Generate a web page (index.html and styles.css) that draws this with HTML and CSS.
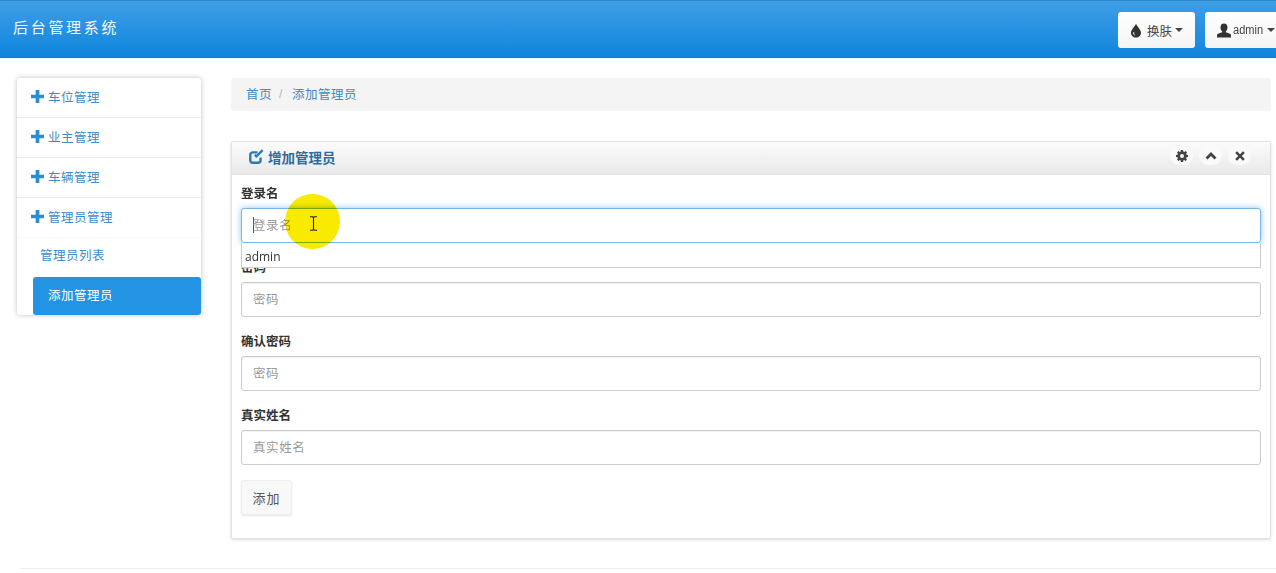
FILE: index.html
```html
<!DOCTYPE html>
<html lang="zh-CN">
<head>
<meta charset="utf-8">
<title>后台管理系统</title>
<link rel="stylesheet" href="styles.css">
</head>
<body>
<header class="topbar">
  <div class="brand">后台管理系统</div>
  <div class="top-actions">
    <button class="top-btn skin-btn" type="button">
      <svg class="ico-tint" viewBox="0 0 12 14"><path d="M6 0C5.600 2.400 1 6 1 9.200 1 12 3.200 14 6 14s5-2 5-4.800C11 6 6.400 2.400 6 0z" fill="#333"/><path d="M3.200 8.800c-.3 1.700.6 3 2 3.400-.8-.9-1.300-2-1-3.600z" fill="#fff"/></svg>
      <span>换肤</span><i class="caret"></i>
    </button>
    <button class="top-btn user-btn" type="button">
      <svg class="ico-user" viewBox="0 0 14 14"><path d="M7 0c2.200 0 3.500 1.500 3.500 3.900 0 1.600-.8 3.200-1.700 3.900v1c1.800.7 4.200 1 5.200 2.400V14H0v-2.800c1-1.400 3.400-1.700 5.200-2.400v-1c-.9-.7-1.700-2.300-1.700-3.900C3.500 1.500 4.800 0 7 0z" fill="#333"/></svg>
      <span class="user-name">admin</span><i class="caret"></i>
    </button>
  </div>
</header>

<div class="layout">
  <nav class="sidebar">
    <a class="nav-item" href="#"><svg class="ico-plus" viewBox="0 0 12 12"><path d="M4.300 0h3.400v4.300H12v3.400H7.700V12H4.300V7.700H0V4.300h4.300z"/></svg>车位管理</a>
    <a class="nav-item" href="#"><svg class="ico-plus" viewBox="0 0 12 12"><path d="M4.300 0h3.400v4.300H12v3.400H7.700V12H4.300V7.700H0V4.300h4.300z"/></svg>业主管理</a>
    <a class="nav-item" href="#"><svg class="ico-plus" viewBox="0 0 12 12"><path d="M4.300 0h3.400v4.300H12v3.400H7.700V12H4.300V7.700H0V4.300h4.300z"/></svg>车辆管理</a>
    <a class="nav-item" href="#"><svg class="ico-plus" viewBox="0 0 12 12"><path d="M4.300 0h3.400v4.300H12v3.400H7.700V12H4.300V7.700H0V4.300h4.300z"/></svg>管理员管理</a>
    <a class="nav-sub" href="#">管理员列表</a>
    <a class="nav-active" href="#">添加管理员</a>
  </nav>

  <main class="content">
    <div class="breadcrumb"><a href="#">首页</a><span class="sep">/</span><a href="#">添加管理员</a></div>

    <section class="panel">
      <div class="panel-head">
        <h2 class="panel-title">
          <svg class="ico-edit" viewBox="0 0 14 14"><path d="M10.800 8v2.500a2.300 2.300 0 0 1-2.300 2.300H3.500a2.300 2.300 0 0 1-2.300-2.300v-5a2.300 2.300 0 0 1 2.300-2.300H8" fill="none" stroke="#2a7ab8" stroke-width="2.200"/><path d="M4.800 6.300l2.100 2.100L13.500 1.800 11.900.3 6.900 5.300 6 4.500z" fill="#2a7ab8"/></svg>
          增加管理员
        </h2>
        <div class="panel-tools">
          <span class="tool"><svg viewBox="0 0 12 12"><path d="M5 0h2l.3 1.600 1 .4L9.700 1l1.400 1.400-1 1.400.4 1 1.500.2v2l-1.500.3-.4 1 .9 1.300-1.400 1.400-1.300-.9-1 .4L7 12H5l-.3-1.500-1-.4-1.300.9L1 9.600l.9-1.300-.4-1L0 7V5l1.500-.2.4-1-.9-1.400L2.400 1l1.300 1 1-.4z" fill="#444"/><circle cx="6" cy="6" r="2" fill="#f4f4f4"/></svg></span>
          <span class="tool"><svg viewBox="0 0 12 12"><path d="M6 2l5.500 5.500L9.500 9.500 6 6 2.500 9.500.5 7.500z" fill="#444"/></svg></span>
          <span class="tool"><svg viewBox="0 0 12 12"><path d="M3 1.200L6 4.200l3-3L10.800 3l-3 3 3 3L9 10.800l-3-3-3 3L1.200 9l3-3-3-3z" fill="#444"/></svg></span>
        </div>
      </div>
      <form class="panel-body">
        <div class="field field-login">
          <label class="field-label">登录名</label>
          <div class="input focused"><i class="text-caret"></i>登录名</div>
          <div class="suggest">admin</div>
          <div class="highlight"></div>
          <svg class="ibeam" viewBox="0 0 9 15"><path d="M1 .7h2.500l1 .8 1-.8H8M4.500 1.500v12M1 14.300h2.500l1-.8 1 .8H8" fill="none" stroke="#222" stroke-width="1.100"/></svg>
        </div>
        <div class="field">
          <label class="field-label">密码</label>
          <div class="input">密码</div>
        </div>
        <div class="field">
          <label class="field-label">确认密码</label>
          <div class="input">密码</div>
        </div>
        <div class="field">
          <label class="field-label">真实姓名</label>
          <div class="input">真实姓名</div>
        </div>
        <button class="submit" type="button">添加</button>
      </form>
    </section>
  </main>
</div>
<div class="footer-line"></div>
</body>
</html>
```

FILE: styles.css
```css
* { box-sizing: border-box; }
html, body { height: 573px; overflow: hidden; }
body {
  margin: 0;
  background: #fff;
  color: #333;
  font-family: "Liberation Sans", "Noto Sans CJK SC", sans-serif;
  font-size: 13px;
}
a { text-decoration: none; }

.topbar {
  height: 58px;
  display: flex;
  justify-content: space-between;
  background: linear-gradient(to bottom, #3f9ee6 0%, #0f86de 100%);
  border-top: 1px solid #2f86c9;
  border-bottom: 1px solid #1f79bd;
  overflow: hidden;
}
.brand {
  margin: 16px 0 0 13px;
  color: #f4f9fd;
  font-size: 15px;
  letter-spacing: 2.700px;
  line-height: 22px;
}
.top-actions {
  display: flex;
  gap: 10px;
  margin: 11px -13px 0 0;
}
.top-btn {
  height: 36px;
  display: flex;
  align-items: center;
  background: linear-gradient(to bottom, #fff, #f4f4f4);
  border: 0;
  border-radius: 3px;
  color: #444;
  font: inherit;
  padding: 0;
}
.skin-btn { width: 77px; padding-left: 12px; font-size: 12.500px; }
.user-btn { width: 84px; padding-left: 12px; font-size: 12px; }
.ico-tint { width: 12px; height: 15px; margin-right: 5px; }
.ico-user { width: 14px; height: 15px; margin-right: 2px; }
.user-name { transform: scaleX(.92); transform-origin: left; margin-right: -2px; }
.caret {
  width: 0;
  height: 0;
  margin-left: 3px;
  border: 4px solid transparent;
  border-top-color: #444;
  border-bottom-width: 0;
}

.layout {
  display: flex;
  align-items: flex-start;
  padding: 20px 5px 0 17px;
  gap: 30px;
}
.sidebar {
  width: 184px;
  flex: none;
  display: flex;
  flex-direction: column;
  border-radius: 3px;
  background: #fff;
  box-shadow: 0 0 5px rgba(0, 0, 0, .25);
}
.nav-item {
  height: 40px;
  display: flex;
  align-items: center;
  padding: 0 0 3px 14px;
  border-bottom: 1px solid #ececec;
  color: #3a8cca;
  font-size: 12.500px;
  letter-spacing: .5px;
}
.nav-item:nth-child(4) { border-bottom-color: #f7f7f7; }
.ico-plus { width: 13px; height: 13px; margin-right: 4px; fill: #2e8bd0; }
.nav-sub {
  height: 39px;
  display: flex;
  align-items: center;
  padding: 0 0 6px 23px;
  color: #3a8cca;
  font-size: 12.500px;
  letter-spacing: .5px;
}
.nav-active {
  height: 38px;
  margin-left: 16px;
  display: flex;
  align-items: center;
  padding: 0 0 4px 15px;
  background: #2394e3;
  border-radius: 3px;
  color: #fff;
  font-size: 12.500px;
  letter-spacing: .5px;
}

.content { flex: 1; min-width: 0; }
.breadcrumb {
  height: 33px;
  display: flex;
  align-items: center;
  padding: 0 0 2px 15px;
  background: #f4f4f4;
  border-radius: 3px;
  font-size: 12.500px;
  letter-spacing: .5px;
}
.breadcrumb a { color: #3a8cca; }
.sep { color: #bbb; margin: 0 9px 0 7px; }

.panel {
  margin-top: 30px;
  height: 398px;
  border: 1px solid #e2e2e2;
  border-radius: 2px;
  box-shadow: 0 1px 3px rgba(0, 0, 0, .14);
  background: #fff;
}
.panel-head {
  height: 33px;
  display: flex;
  align-items: center;
  justify-content: space-between;
  padding: 0 19px 0 16px;
  background: linear-gradient(to bottom, #fbfbfb, #e9e9e9);
  border-bottom: 1px solid #e2e2e2;
}
.panel-title {
  margin: 0 0 3px;
  display: flex;
  align-items: center;
  gap: 3px;
  color: #2a6d9e;
  font-size: 13.500px;
  font-weight: bold;
}
.ico-edit { width: 17px; height: 15px; }
.panel-tools { display: flex; gap: 6px; margin-top: -5px; }
.tool {
  width: 23px;
  height: 19px;
  display: flex;
  align-items: center;
  justify-content: center;
  background: #fafafa;
  border-radius: 10px;
}
.tool svg { width: 12px; height: 12px; }

.panel-body { padding: 8px 9px 0; }
.field { position: relative; margin-bottom: 14px; }
.field-login { z-index: 1; }
.field-label {
  display: block;
  height: 20px;
  margin-bottom: 5px;
  padding-top: 1px;
  color: #333;
  font-size: 12.500px;
  font-weight: bold;
  line-height: 20px;
}
.input {
  height: 35px;
  display: flex;
  align-items: center;
  padding: 0 0 2px 11px;
  border: 1px solid #ccc;
  border-radius: 3px;
  background: #fff;
  color: #999;
  font-size: 12.500px;
  letter-spacing: .6px;
  box-shadow: inset 0 1px 1px rgba(0, 0, 0, .06);
}
.input.focused {
  border-color: #7ab6e6;
  box-shadow: 0 0 6px rgba(102, 175, 233, .7);
}
.text-caret {
  width: 1px;
  height: 16px;
  margin-right: -1px;
  background: #555;
}
.suggest {
  position: absolute;
  left: 0;
  right: 0;
  top: 60px;
  height: 25px;
  padding: 6px 0 0 3px;
  background: #fff;
  border: 1px solid #ccc;
  border-top: 0;
  color: #333;
  font-family: "Open Sans", "Liberation Sans", sans-serif;
  font-size: 12px;
  line-height: 16px;
}
.highlight {
  position: absolute;
  left: 44px;
  top: 11px;
  width: 55px;
  height: 55px;
  border-radius: 50%;
  background: #f9ea00;
  mix-blend-mode: multiply;
}
.ibeam {
  position: absolute;
  left: 68px;
  top: 33px;
  width: 9px;
  height: 15px;
}
.submit {
  width: 51px;
  height: 35px;
  margin-top: 1px;
  padding: 0;
  background: #f8f8f8;
  border: 1px solid #eee;
  border-radius: 3px;
  box-shadow: 0 1px 2px rgba(0, 0, 0, .1);
  color: #555;
  font: inherit;
  letter-spacing: 1px;
}
.footer-line {
  height: 1px;
  margin: 29px 0 0 20px;
  background: #eee;
}
```
